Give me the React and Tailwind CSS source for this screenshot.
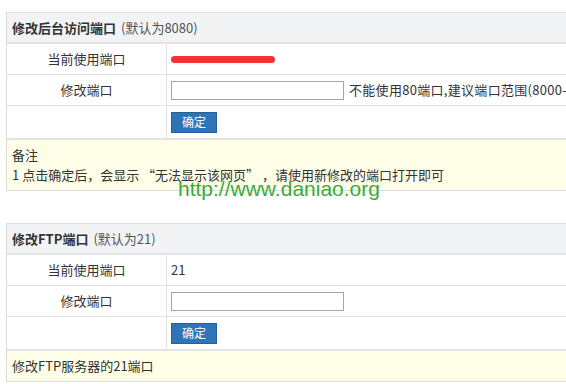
import React from 'react'

const font = { fontFamily: '"Noto Sans CJK SC", "Noto Sans", sans-serif' }

function Row({ label, children, tall }) {
  return (
    <div className={`grid grid-cols-[160px_1fr] border-b border-[#e2e2e2] ${tall ? 'h-[33px]' : 'h-[31px]'}`}>
      <div className="flex items-center justify-center border-r border-[#e2e2e2] text-[13px] text-[#333]">
        {label}
      </div>
      <div className="flex items-center pl-[4px] text-[13px] text-[#333]">{children}</div>
    </div>
  )
}

function Panel({ title, sub, current, hint, note, className = '' }) {
  return (
    <div className={`w-[800px] border border-[#dcdcdc] bg-white ${className}`}>
      <div className="flex h-[31px] items-center border-b-2 border-[#e4e4e4] bg-[#f2f3f5] pl-[5px] text-[13px]">
        <span className="font-semibold text-[#333]">{title}</span>
        <span className="ml-[5px] text-[#555]">{sub}</span>
      </div>
      <Row label="当前使用端口">{current}</Row>
      <Row label="修改端口">
        <input
          type="text"
          className="h-[19px] w-[173px] border border-[#a6a6a6] bg-white outline-none"
        />
        {hint && <span className="ml-[5px] whitespace-nowrap tracking-[0.3px] text-[#333]">{hint}</span>}
      </Row>
      <Row label="" tall>
        <button className="h-[21px] w-[46px] border border-[#26609c] bg-[#2f74b6] text-[12px] text-white">
          确定
        </button>
      </Row>
      <div className="border-t border-[#e4e4e4] bg-[#fefee8] px-[5px] text-[13px] leading-[20px] text-[#333]">
        {note}
      </div>
    </div>
  )
}

export default function App() {
  return (
    <div className="relative h-[384px] w-[566px] overflow-hidden bg-white pl-[6px] pt-[12px]" style={font}>
      <Panel
        title="修改后台访问端口"
        sub="(默认为8080)"
        current={<div className="h-[7px] w-[104px] rounded-full bg-[#ee3535]" />}
        hint="不能使用80端口,建议端口范围(8000-9999)"
        note={
          <div className="py-[5px]">
            <div>备注</div>
            <div className="whitespace-nowrap">1 点击确定后，会显示 “无法显示该网页” ，请使用新修改的端口打开即可</div>
          </div>
        }
      />
      <Panel
        className="mt-[32px]"
        title="修改FTP端口"
        sub="(默认为21)"
        current="21"
        note={<div className="py-[5px]">修改FTP服务器的21端口</div>}
      />
      <div
        className="absolute left-[178px] top-[177px] text-[21px] leading-[24px] text-[#3bab3b]"
        style={{ fontFamily: '"Liberation Sans", Arial, sans-serif' }}
      >
        http://www.daniao.org
      </div>
    </div>
  )
}
